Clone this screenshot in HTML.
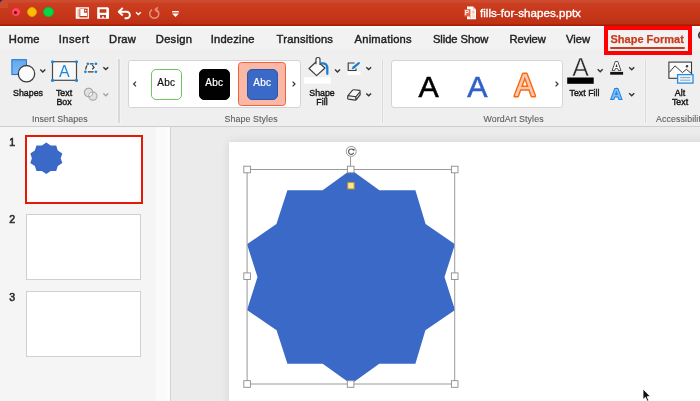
<!DOCTYPE html>
<html lang="en">
<head>
<meta charset="utf-8">
<title>fills-for-shapes.pptx</title>
<style>
*{box-sizing:border-box;margin:0;padding:0}
html,body{width:700px;height:401px;overflow:hidden;background:#ececec}
body{font-family:"Liberation Sans",Arial,sans-serif;font-size:11px;color:#262626;position:relative}
#app{position:absolute;left:0;top:0;width:700px;height:401px;overflow:hidden;will-change:transform;opacity:0.9999}
.abs{position:absolute}
/* title bar */
#titlebar{left:0;top:0;width:700px;height:26px;background:linear-gradient(#cd4c30 0%,#cd4a2d 8%,#cc3e21 12%,#c7381b 50%,#be3115 90%,#a81e06 96%,#a61c04 100%)}
#corner{left:0;top:0;width:3px;height:3px;background:#1c2a5a}
#corner i{position:absolute;left:0;top:0;width:8px;height:8px;border-radius:4px 0 0 0;background:#cd4c30}
.tl{width:10.4px;height:10.4px;border-radius:50%;top:6.9px}
#title{left:480px;top:5px;color:#fff;font-size:11.6px;line-height:15px;white-space:nowrap;-webkit-text-stroke:0.35px #fff;letter-spacing:0.02px}
/* tabs */
#tabs{left:0;top:26px;width:700px;height:26px;background:linear-gradient(#fdfdfd 0,#fbfbfb 1.4px,#f2f2f2 2.4px,#f2f2f2 22px,#efefef 25px)}
.tab{top:8px;font-size:11.2px;line-height:14px;white-space:nowrap;color:#222;-webkit-text-stroke:0.42px #222}
#sf{left:610.5px;top:32.3px;font-size:11px;line-height:14px;font-weight:bold;color:#c93c1f;white-space:nowrap;-webkit-text-stroke:0.25px #c93c1f}
#sfu{left:610px;top:46.9px;width:75px;height:2.2px;background:#c93c1f;border-radius:1px}
#redbox{left:604px;top:25.6px;width:88px;height:29.2px;border:4px solid #ff0000}
/* ribbon */
#ribbon{left:0;top:52px;width:700px;height:74.6px;background:#efefef;border-bottom:1px solid #cdcdcd}
.sep{top:59px;width:1.4px;height:64px;background:#d9d9d9;box-shadow:0 0 0 0.8px #f4f4f4}
.gallery{top:60.2px;height:47.4px;background:#fff;border:1px solid #d4d4d4;border-radius:3px}
.lbl{font-size:9.7px;transform:scaleX(0.91);line-height:12px;text-align:center;white-space:nowrap;color:#1a1a1a;-webkit-text-stroke:0.45px #1a1a1a}
.glbl{font-size:8.8px;line-height:12px;white-space:nowrap;color:#5e5e5e;top:112.7px;letter-spacing:0.12px;-webkit-text-stroke:0.12px #5e5e5e}
.abc{top:68.5px;width:31.4px;height:31px;border-radius:5px;font-size:10px;line-height:26px;text-align:center;letter-spacing:0.3px;-webkit-text-stroke:0.2px}
.wa{top:68.4px;font-size:30.4px;line-height:36px;width:30px;text-align:center;-webkit-text-stroke:0.55px}
/* left panel */
#left{left:0;top:127px;width:156px;height:274px;background:#f5f5f5}
#scroll{left:156px;top:127px;width:11px;height:274px;background:#fafafa}
#split{left:166.3px;top:127px;width:5.2px;height:274px;background:#fcfcfc;border-right:1.5px solid #d2d2d2}
.num{left:9.3px;font-size:10.5px;font-weight:normal;color:#2e2e2e;-webkit-text-stroke:0.6px #2e2e2e;line-height:12px}
.thumb{left:26px;width:115px;height:66px;background:#fff;border:1px solid #d0d0d0}
/* main */
#main{left:171px;top:127px;width:529px;height:274px;background:#ebebeb}
#slide{left:229.3px;top:141.6px;width:480px;height:270px;background:#fff;box-shadow:0 0 9px rgba(0,0,0,.10)}
</style>
</head>
<body>
<div id="app">

<!-- main editing area -->
<div id="main" class="abs"></div>
<div id="slide" class="abs"></div>
<svg class="abs" style="left:229px;top:141px" width="471" height="260" viewBox="229 141 471 260">
  <polygon fill="#3b69c8" points="351,169.8 379.4,190.2 415.4,190.2 425.6,224 455,244.2 444.5,277 455,310 425.4,330.2 415.4,363.7 379.3,363.7 351,384 322.7,363.7 287.4,363.7 276.6,330.2 247,310 257.5,277 247,244.2 276.4,224 287.4,190.2 322.6,190.2"/>
  <g fill="none" stroke="#9a9a9a" stroke-width="1">
    <rect x="247.1" y="169.5" width="207.6" height="214.5"/>
    <line x1="350.5" y1="157" x2="350.5" y2="166"/>
  </g>
  <g fill="#fff" stroke="#8c8c8c" stroke-width="0.9">
    <rect x="243.8" y="166.2" width="6.6" height="6.6"/>
    <rect x="347.4" y="166.2" width="6.6" height="6.6"/>
    <rect x="451.4" y="166.2" width="6.6" height="6.6"/>
    <rect x="243.8" y="272.9" width="6.6" height="6.6"/>
    <rect x="451.4" y="272.9" width="6.6" height="6.6"/>
    <rect x="243.8" y="380.7" width="6.6" height="6.6"/>
    <rect x="347.3" y="380.7" width="6.6" height="6.6"/>
    <rect x="451.4" y="380.7" width="6.6" height="6.6"/>
    <circle cx="351.2" cy="151.4" r="5"/>
  </g>
  <path d="M353.5 150.2 A2.7 2.7 0 1 0 353.7 152.8" fill="none" stroke="#555" stroke-width="1.1"/>
  <path d="M352.2 148.7 L354.7 148.9 L354 151.4 Z" fill="#555"/>
  <rect x="347.8" y="182.6" width="6.3" height="6.3" fill="#ffe98f" stroke="#c79a2c" stroke-width="1"/>
  <!-- cursor -->
  <path d="M643 389 L643 399.5 L645.4 397.3 L647.2 401.2 L648.8 400.5 L647.1 396.7 L650.3 396.5 Z" fill="#111" stroke="#fff" stroke-width="0.8"/>
</svg>

<!-- left panel -->
<div id="left" class="abs"></div>
<div id="scroll" class="abs"></div>
<div id="split" class="abs"></div>
<div class="abs num" style="top:136px">1</div>
<div class="abs num" style="top:213px">2</div>
<div class="abs num" style="top:291px">3</div>
<div class="abs" style="left:24.9px;top:134.8px;width:118.1px;height:69.4px;background:#fff;border:2.3px solid #e41a04;border-top-width:2.6px;border-bottom-width:2.6px"></div>
<svg class="abs" style="left:28px;top:140px" width="40" height="40" viewBox="28 140 40 40">
  <polygon fill="#3b69c8" points="46.3,142.4 50.7,145.4 56.2,145.4 57.8,150.4 62.3,153.4 60.7,158.2 62.3,163.1 57.8,166 56.2,171 50.7,171 46.3,174 41.9,171 36.5,171 34.8,166 30.3,163.1 31.9,158.2 30.3,153.4 34.8,150.4 36.5,145.4 41.9,145.4"/>
</svg>
<div class="abs thumb" style="top:214px"></div>
<div class="abs thumb" style="top:291.2px"></div>

<!-- ribbon -->
<div id="ribbon" class="abs"></div>
<div id="tabs" class="abs"></div>

<div class="abs tab" style="left:8.8px;top:32px;letter-spacing:0.3px">Home</div>
<div class="abs tab" style="left:58.7px;top:32px;letter-spacing:0.48px">Insert</div>
<div class="abs tab" style="left:109.1px;top:32px;letter-spacing:0.23px">Draw</div>
<div class="abs tab" style="left:155.8px;top:32px;letter-spacing:0.25px">Design</div>
<div class="abs tab" style="left:210.7px;top:32px;letter-spacing:0.2px">Indezine</div>
<div class="abs tab" style="left:276.6px;top:32px;letter-spacing:0.2px">Transitions</div>
<div class="abs tab" style="left:354.6px;top:32px;letter-spacing:0.18px">Animations</div>
<div class="abs tab" style="left:432.9px;top:32px;letter-spacing:-0.05px">Slide Show</div>
<div class="abs tab" style="left:509.6px;top:32px;letter-spacing:-0.1px">Review</div>
<div class="abs tab" style="left:566.0px;top:32px;letter-spacing:0px">View</div>
<div id="sf" class="abs">Shape Format</div>
<div id="sfu" class="abs"></div>
<div id="redbox" class="abs"></div>
<svg class="abs" style="left:692px;top:30px" width="8" height="12" viewBox="692 30 8 12"><circle cx="702.2" cy="35.2" r="3.4" fill="none" stroke="#3a3a3a" stroke-width="1.8"/></svg>

<!-- Insert Shapes group -->
<svg class="abs" style="left:8px;top:56px" width="104" height="48" viewBox="8 56 104 48">
  <defs><linearGradient id="sq" x1="0" y1="0" x2="0" y2="1"><stop offset="0" stop-color="#63a8ee"/><stop offset="1" stop-color="#7dbbf6"/></linearGradient></defs>
  <rect x="11.9" y="59.7" width="14.5" height="14.8" fill="url(#sq)" stroke="#2675d6" stroke-width="1.1"/>
  <circle cx="26.5" cy="73.7" r="8.2" fill="#fcfcfc" stroke="#3d3d3d" stroke-width="1.3"/>
  <path d="M40.3 69.6 L42.8 72.1 L45.3 69.6" fill="none" stroke="#333" stroke-width="1.4"/>
  <rect x="52.5" y="61.7" width="24" height="18.6" fill="#f8f8f8" stroke="#4a4a4a" stroke-width="1.2"/>
  <g fill="#1a8ae0"><circle cx="52.5" cy="61.8" r="1.55"/><circle cx="76.5" cy="61.8" r="1.55"/><circle cx="52.5" cy="80.4" r="1.55"/><circle cx="76.5" cy="80.4" r="1.55"/></g>
  <text x="64.4" y="76.8" font-family="Liberation Sans,Arial,sans-serif" font-size="16" fill="#1a8ae0" text-anchor="middle">A</text>
  <!-- arrange -->
  <rect x="84.6" y="62.8" width="12.4" height="10" rx="2" fill="#f6f6f6"/>
  <path d="M89.8 63.9 H93.6 M87.8 71.8 H93.6 M85.8 69.6 Q85.6 66.6 87.2 65.4" fill="none" stroke="#3a3a3a" stroke-width="1.3"/>
  <path d="M92.2 65 L94.1 67.5 L92.2 69.2" fill="none" stroke="#3a3a3a" stroke-width="1.2"/>
  <g fill="#1a8ae0"><circle cx="87.8" cy="63.8" r="1.4"/><circle cx="95.9" cy="63.8" r="1.4"/><circle cx="85.4" cy="71.8" r="1.4"/><circle cx="95.9" cy="71.8" r="1.4"/></g>
  <path d="M103.4 67.2 L105.8 69.6 L108.2 67.2" fill="none" stroke="#333" stroke-width="1.4"/>
  <!-- merge -->
  <defs><clipPath id="mc"><circle cx="88.6" cy="92.5" r="3.8"/></clipPath></defs>
  <circle cx="88.6" cy="92.5" r="4.2" fill="#e1e1e1" stroke="#a9a9a9" stroke-width="1.1"/>
  <circle cx="92.9" cy="96.1" r="4.1" fill="#e1e1e1" stroke="#a9a9a9" stroke-width="1.1"/>
  <circle cx="92.9" cy="96.1" r="3.6" fill="#fafafa" clip-path="url(#mc)"/>
  <circle cx="88.6" cy="92.5" r="4.2" fill="none" stroke="#a9a9a9" stroke-width="1.1"/>
  <path d="M103.4 93.4 L105.8 95.8 L108.2 93.4" fill="none" stroke="#a4a4a4" stroke-width="1.4"/>
</svg>
<div class="abs lbl" style="left:7.8px;top:86.5px;width:40px">Shapes</div>
<div class="abs lbl" style="left:44px;top:87px;width:40px;line-height:9.8px;padding-top:0.7px">Text<br>Box</div>
<div class="abs glbl" style="left:32px">Insert Shapes</div>
<div class="abs sep" style="left:118.4px"></div>

<!-- Shape Styles group -->
<div class="abs gallery" style="left:127.7px;width:173.2px"></div>
<svg class="abs" style="left:130px;top:78px" width="10" height="12" viewBox="0 0 10 12"><path d="M6 3.6 L3.6 6 L6 8.4" fill="none" stroke="#333" stroke-width="1.2"/></svg>
<svg class="abs" style="left:289px;top:78px" width="10" height="12" viewBox="0 0 10 12"><path d="M3.6 3.6 L6 6 L3.6 8.4" fill="none" stroke="#333" stroke-width="1.2"/></svg>
<div class="abs abc" style="left:150.6px;border:1.9px solid #72c163;background:#fff;color:#111;line-height:25.2px">Abc</div>
<div class="abs abc" style="left:198.6px;border:1.5px solid #000;background:#000;color:#fff">Abc</div>
<div class="abs" style="left:238px;top:61.6px;width:48px;height:44.4px;background:#fab9a6;border:1.2px solid #f4613a;border-radius:3.5px"></div>
<div class="abs abc" style="left:246.6px;border:1.5px solid #2e57a8;background:#3b69c8;color:#fff">Abc</div>
<div class="abs glbl" style="left:224.4px">Shape Styles</div>

<!-- Shape fill etc -->
<svg class="abs" style="left:302px;top:55px" width="74" height="50" viewBox="302 55 74 50">
  <rect x="304" y="77.2" width="26.7" height="6.5" fill="#fff"/>
  <path d="M317 61 L325 68 L316.6 75.7 L309 68.5 Z" fill="#fbfbfb" stroke="#3a3a3a" stroke-width="1.15" stroke-linejoin="round"/>
  <path d="M316 64.2 V59.3 Q316 57.5 318 57.5 Q320 57.5 320 59.3 V65" fill="#fbfbfb" stroke="#3a3a3a" stroke-width="1.15"/>
  <path d="M321.6 63.4 Q327.4 62.8 327.3 68.6 V73.8" fill="none" stroke="#1a7fd6" stroke-width="2.3" stroke-linecap="round"/>
  <path d="M335 69.6 L337.5 72.1 L340 69.6" fill="none" stroke="#333" stroke-width="1.4"/>
  <!-- outline -->
  <rect x="347.4" y="71.4" width="13" height="3.6" fill="#fff"/>
  <path d="M354.6 63 H348.2 V70.5 H356 V68.4" fill="none" stroke="#3a3a3a" stroke-width="1.1"/>
  <path d="M351.6 69.6 L352.6 66.8 L358.2 62.2 Q359.8 61.6 360 63.4 L354.4 68.6 Z" fill="#1a7fd6"/>
  <path d="M366.3 67.2 L368.7 69.6 L371.1 67.2" fill="none" stroke="#333" stroke-width="1.4"/>
  <!-- effects -->
  <path d="M348 95.6 L352.6 90.2 Q353 89.6 354 89.7 L359.4 90.4 Q360.6 90.7 359.9 91.8 L355.8 96.8 Z" fill="#fafafa" stroke="#3a3a3a" stroke-width="1.1" stroke-linejoin="round"/>
  <path d="M348 95.6 L347.6 98.2 Q347.6 99 348.6 99.2 L355 100.2 Q356 100.2 356.6 99.4 L360.2 94.6 L359.9 91.8 M355.8 96.8 L355.8 100" fill="none" stroke="#3a3a3a" stroke-width="1.2" stroke-linejoin="round"/>
  <path d="M366.3 93.4 L368.7 95.8 L371.1 93.4" fill="none" stroke="#333" stroke-width="1.4"/>
</svg>
<div class="abs lbl" style="left:302px;top:87px;width:40px;line-height:9.8px;padding-top:0.7px">Shape<br>Fill</div>
<div class="abs sep" style="left:381.6px"></div>

<!-- WordArt -->
<div class="abs gallery" style="left:390.8px;width:172.6px"></div>
<div class="abs wa" style="left:413.7px;color:#000">A</div>
<div class="abs wa" style="left:462.3px;color:#2f62c9">A</div>
<svg class="abs" style="left:508px;top:66px" width="36" height="38" viewBox="508 66 36 38"><text transform="translate(524.7 96.2) scale(0.96 1)" x="0" y="0" font-family="Liberation Sans,Arial,sans-serif" font-size="31.4" fill="#f9c8b6" stroke="#fb6a08" stroke-width="3" stroke-linejoin="round" paint-order="stroke" text-anchor="middle">A</text></svg>
<svg class="abs" style="left:552.4px;top:77.8px" width="10" height="12" viewBox="0 0 10 12"><path d="M3.6 3.6 L6 6 L3.6 8.4" fill="none" stroke="#333" stroke-width="1.2"/></svg>
<div class="abs glbl" style="left:483.5px">WordArt Styles</div>

<svg class="abs" style="left:564px;top:54px" width="74" height="50" viewBox="564 54 74 50">
  <text x="580.6" y="76.1" font-family="Liberation Sans,Arial,sans-serif" font-size="25" fill="#2a2a2a" stroke="#efefef" stroke-width="0.45" text-anchor="middle">A</text>
  <rect x="567.2" y="77.5" width="26.5" height="6.3" fill="#000"/>
  <path d="M597.7 69.3 L600.2 71.8 L602.7 69.3" fill="none" stroke="#333" stroke-width="1.4"/>
  <text x="616.6" y="70.3" font-family="Liberation Sans,Arial,sans-serif" font-size="11.2" font-weight="bold" fill="#fff" stroke="#333" stroke-width="1.7" paint-order="stroke" text-anchor="middle">A</text>
  <rect x="610.2" y="71.9" width="12.9" height="2.8" fill="#111"/>
  <path d="M629.2 67.2 L631.7 69.7 L634.2 67.2" fill="none" stroke="#333" stroke-width="1.4"/>
  <text x="616.4" y="99.4" font-family="Liberation Sans,Arial,sans-serif" font-size="14.8" font-weight="bold" fill="#7dbcf5" stroke="#1c86e4" stroke-width="2" paint-order="stroke" text-anchor="middle">A</text>
  <path d="M629.2 93.3 L631.7 95.8 L634.2 93.3" fill="none" stroke="#333" stroke-width="1.4"/>
</svg>
<div class="abs lbl" style="left:564.2px;top:86.6px;width:41px">Text Fill</div>
<div class="abs sep" style="left:644.7px"></div>

<!-- Alt text -->
<svg class="abs" style="left:666px;top:58px" width="34" height="30" viewBox="666 58 34 30">
  <rect x="668.9" y="62.1" width="22.6" height="16.2" fill="#fbfbfb" stroke="#3a3a3a" stroke-width="1.1"/>
  <path d="M669.3 72.4 L675 65.8 L682.4 72.6 L686.4 69.3 L691.3 73.4" fill="none" stroke="#3a3a3a" stroke-width="1"/>
  <circle cx="687" cy="66.3" r="1.2" fill="#3a3a3a"/>
  <rect x="677.6" y="74.6" width="15.4" height="8.5" fill="#eaf3fc" stroke="#2a8ae0" stroke-width="1.3"/>
  <path d="M680.2 77.6 H690.4 M680.2 80.2 H690.4" stroke="#7f9bb8" stroke-width="0.9"/>
</svg>
<div class="abs lbl" style="left:660px;top:87px;width:40px;line-height:9.8px;padding-top:0.7px">Alt<br>Text</div>
<div class="abs glbl" style="left:656px">Accessibility</div>

<!-- title bar -->
<div id="titlebar" class="abs"></div>
<div id="corner" class="abs"><i></i></div>
<div class="abs tl" style="left:10.6px;background:#fc4b5a;border:0.7px solid #e0252f"></div>
<div class="abs" style="left:14px;top:11px;width:3px;height:3px;border-radius:50%;background:#5a0a0e"></div>
<div class="abs tl" style="left:27px;background:#fdbc00;border:0.7px solid #dc9a06"></div>
<div class="abs tl" style="left:43.2px;background:#06d648;border:0.7px solid #12b33a"></div>
<svg class="abs" style="left:70px;top:3px" width="115" height="20" viewBox="70 3 115 20">
  <!-- sidebar icon -->
  <rect x="76.4" y="7.9" width="11.9" height="10.2" fill="none" stroke="#fff" stroke-width="1.3"/>
  <rect x="76" y="8" width="3.4" height="10" fill="#fff"/>
  <rect x="77.8" y="9" width="0.5" height="8" fill="#c93a1d"/>
  <path d="M80.3 9 H84.1 V12.7 H87 V16 H80.3 Z" fill="#fff"/>
  <rect x="85" y="9.9" width="1.3" height="1.3" fill="#fff"/>
  <!-- save -->
  <path d="M97.2 7.3 H107.9 L109 8.4 V18.7 H97.2 Z M99.6 9.3 V12.7 H106.4 V9.3 Z M100 14.9 V17.8 H102.2 V16.2 H103.8 V17.8 H106 V14.9 Z" fill="#fff" fill-rule="evenodd"/>
  <!-- undo -->
  <path d="M122.8 7.9 L118.7 11.7 L122.8 15.5 M119 11.7 H126.6 A3.3 3.3 0 0 1 126.6 18.3 H124.6" fill="none" stroke="#fff" stroke-width="1.9" stroke-linejoin="round"/>
  <path d="M136 12.2 L138.4 14.6 L140.8 12.2" fill="none" stroke="#fff" stroke-width="1.4"/>
  <!-- redo faded -->
  <path d="M152 9.6 Q149 12 150 15.2 Q151.4 18.4 154.8 18.2 Q158.6 17.6 158.8 13.8 Q158.6 10.4 155.4 9.6 M158 7.4 L155.2 9.6 L157.6 12" fill="none" stroke="#e58f79" stroke-width="1.5" stroke-linejoin="round"/>
  <!-- customize -->
  <rect x="172.2" y="11" width="6.6" height="1.4" fill="#fff"/>
  <path d="M172 13.6 H179 L175.5 17 Z" fill="#fff"/>
</svg>
<!-- doc icon -->
<svg class="abs" style="left:463px;top:5px" width="15" height="16" viewBox="463 5 15 16">
  <path d="M467 6.5 H473 L476 9.5 V19.2 H467 Z" fill="#fff"/>
  <path d="M473 6.5 V9.5 H476 Z" fill="#f2c8bd"/>
  <rect x="471.6" y="10.6" width="3" height="3" fill="#f6c9b5"/>
  <rect x="471.6" y="14.4" width="3.2" height="3.4" fill="#fae0d4"/>
  <rect x="469.6" y="9" width="1.4" height="9" fill="#f3b7a4"/>
  <rect x="464" y="9.2" width="6" height="7.3" fill="#e8674a"/>
  <text x="467" y="15.2" font-family="Liberation Sans,Arial,sans-serif" font-size="6.6" font-weight="bold" fill="#fff" text-anchor="middle">P</text>
</svg>
<div id="title" class="abs">fills-for-shapes.pptx</div>

</div>
</body>
</html>
